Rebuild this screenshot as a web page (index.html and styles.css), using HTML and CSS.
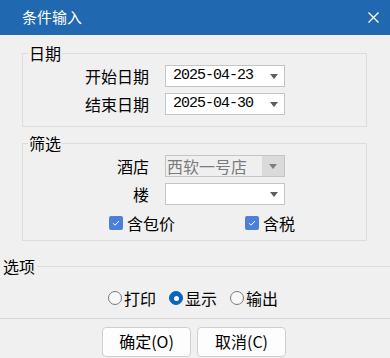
FILE: index.html
```html
<!DOCTYPE html>
<html lang="zh-CN">
<head>
<meta charset="utf-8">
<title>条件输入</title>
<link rel="stylesheet" href="styles.css">
</head>
<body>
<div class="dialog">
  <div class="titlebar">
    <span class="title">条件输入</span>
    <svg class="close" width="11" height="11" viewBox="0 0 11 11"><path d="M0.5 0.5 L10.5 10.5 M10.5 0.5 L0.5 10.5" stroke="#fff" stroke-width="1.3" fill="none"/></svg>
  </div>

  <fieldset class="group group-date">
    <legend>日期</legend>
    <div class="form-grid">
      <span class="lbl">开始日期</span>
      <div class="combo"><span class="date">2025-04-23</span><span class="arrow"></span></div>
      <span class="lbl">结束日期</span>
      <div class="combo"><span class="date">2025-04-30</span><span class="arrow"></span></div>
    </div>
  </fieldset>

  <fieldset class="group group-filter">
    <legend>筛选</legend>
    <div class="form-grid">
      <span class="lbl">酒店</span>
      <div class="combo disabled"><span class="text">西软一号店</span><span class="dropbtn"><span class="arrow"></span></span></div>
      <span class="lbl">楼</span>
      <div class="combo"><span class="text"></span><span class="arrow"></span></div>
    </div>
    <div class="checks">
      <label class="check"><span class="box"><svg width="14" height="14" viewBox="0 0 14 14"><path d="M4 7.2 L6 9.2 L10 5" stroke="#fff" stroke-width="1" fill="none"/></svg></span>含包价</label>
      <label class="check"><span class="box"><svg width="14" height="14" viewBox="0 0 14 14"><path d="M4 7.2 L6 9.2 L10 5" stroke="#fff" stroke-width="1" fill="none"/></svg></span>含税</label>
    </div>
  </fieldset>

  <div class="options-head"><span class="opt-title">选项</span><span class="rule"></span></div>

  <div class="radios">
    <label class="radio"><span class="circle"></span>打印</label>
    <label class="radio"><span class="circle on"></span>显示</label>
    <label class="radio"><span class="circle"></span>输出</label>
  </div>

  <div class="sep"></div>

  <div class="buttons">
    <button class="btn">确定(O)</button>
    <button class="btn">取消(C)</button>
  </div>
</div>
</body>
</html>
```

FILE: styles.css
```css
html, body {
  margin: 0;
  padding: 0;
}
body {
  width: 390px;
  height: 358px;
  overflow: hidden;
  background: #f0f0f0;
  font-family: "Noto Sans CJK SC", "Noto Sans", sans-serif;
  font-size: 16px;
  line-height: 18px;
  color: #000;
}
.titlebar {
  height: 35px;
  box-sizing: border-box;
  background: #2068b0;
  color: #fff;
  display: flex;
  align-items: center;
  justify-content: space-between;
  padding: 0 11px 2px 22px;
  font-size: 15px;
}
.close {
  display: block;
  margin-top: 2px;
}
.group {
  margin: 9px 23px 0 22px;
  padding: 3px 0 11px 5px;
  border: 1px solid #dcdcdc;
  min-width: 0;
}
.group-filter {
  margin-top: 7px;
  padding-bottom: 8px;
}
.group legend {
  padding: 0 1px;
  font-size: 16px;
  line-height: 18px;
}
.form-grid {
  display: grid;
  grid-template-columns: 121px 120px;
  column-gap: 16px;
  row-gap: 6px;
  align-items: center;
}
.lbl {
  text-align: right;
}
.combo {
  height: 22px;
  box-sizing: border-box;
  border: 1px solid #c6c6c6;
  background: #fff;
  display: flex;
  align-items: center;
}
.date {
  font-family: "Liberation Mono", monospace;
  font-size: 15px;
  letter-spacing: -1px;
  padding-left: 7px;
  color: #000;
}
.text {
  padding-left: 1px;
}
.arrow {
  width: 0;
  height: 0;
  border-left: 4.5px solid transparent;
  border-right: 4.5px solid transparent;
  border-top: 5px solid #5a5f5a;
  margin-left: auto;
  margin-right: 6px;
}
.combo.disabled {
  background: #efefef;
  border-color: #c4c4c4;
  color: #7b7b7b;
}
.dropbtn {
  margin-left: auto;
  width: 22px;
  align-self: stretch;
  background: #dadada;
  display: flex;
  align-items: center;
  justify-content: center;
}
.dropbtn .arrow {
  margin: 0;
  border-top-color: #7d807d;
}
.checks {
  display: flex;
  gap: 70px;
  margin-top: 9px;
  padding-left: 81px;
  height: 18px;
  align-items: center;
}
.check {
  display: flex;
  align-items: center;
  gap: 4px;
}
.box {
  width: 14px;
  height: 14px;
  border-radius: 2px;
  background: #4a80d8;
  display: block;
}
.box svg {
  display: block;
}
.options-head {
  display: flex;
  align-items: center;
  margin-top: 16px;
  padding-left: 3px;
  height: 18px;
}
.rule {
  flex: 1;
  height: 1px;
  background: #dcdcdc;
  margin-left: 2px;
}
.radios {
  display: flex;
  align-items: center;
  gap: 13px;
  margin-top: 14px;
  padding-left: 108px;
  height: 18px;
}
.radio {
  display: flex;
  align-items: center;
  gap: 2px;
}
.circle {
  width: 14px;
  height: 14px;
  box-sizing: border-box;
  border-radius: 50%;
  border: 1px solid #7a7a7a;
  background: #f7f7f7;
  display: flex;
  align-items: center;
  justify-content: center;
}
.circle.on {
  border-color: #0a64c0;
  background: #0a64c0;
}
.circle.on::after {
  content: "";
  width: 5px;
  height: 5px;
  border-radius: 50%;
  background: #fff;
}
.sep {
  height: 1px;
  background: #d9d9d9;
  margin-top: 11px;
}
.buttons {
  display: flex;
  gap: 6px;
  margin-top: 8px;
  padding-left: 102px;
}
.btn {
  width: 89px;
  height: 30px;
  box-sizing: border-box;
  border: 1px solid #cfcfcf;
  border-radius: 4px;
  background: #fdfdfd;
  font-family: "Noto Sans CJK SC", sans-serif;
  font-size: 16px;
  line-height: 18px;
  color: #000;
  padding: 0 0 2px;
}
```
